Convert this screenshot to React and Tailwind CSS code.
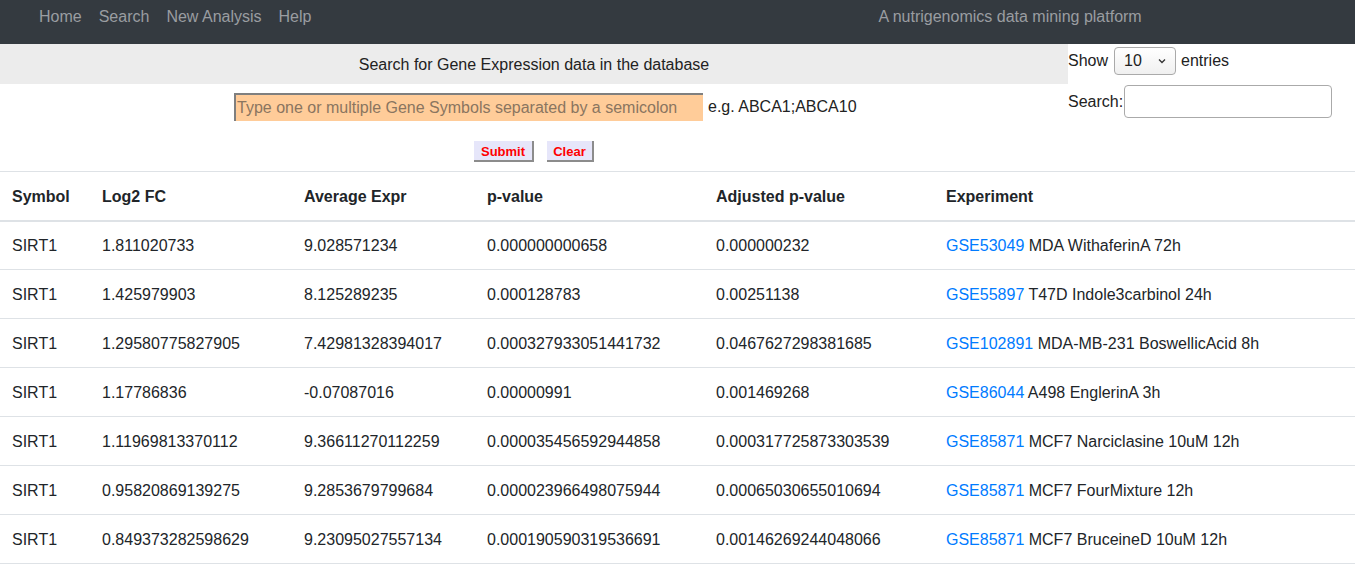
import React from 'react';

const rows = [
  ['SIRT1', '1.811020733', '9.028571234', '0.000000000658', '0.000000232', 'GSE53049', 'MDA WithaferinA 72h'],
  ['SIRT1', '1.425979903', '8.125289235', '0.000128783', '0.00251138', 'GSE55897', 'T47D Indole3carbinol 24h'],
  ['SIRT1', '1.29580775827905', '7.42981328394017', '0.000327933051441732', '0.0467627298381685', 'GSE102891', 'MDA-MB-231 BoswellicAcid 8h'],
  ['SIRT1', '1.17786836', '-0.07087016', '0.00000991', '0.001469268', 'GSE86044', 'A498 EnglerinA 3h'],
  ['SIRT1', '1.11969813370112', '9.36611270112259', '0.000035456592944858', '0.000317725873303539', 'GSE85871', 'MCF7 Narciclasine 10uM 12h'],
  ['SIRT1', '0.95820869139275', '9.2853679799684', '0.000023966498075944', '0.00065030655010694', 'GSE85871', 'MCF7 FourMixture 12h'],
  ['SIRT1', '0.849373282598629', '9.23095027557134', '0.000190590319536691', '0.00146269244048066', 'GSE85871', 'MCF7 BruceineD 10uM 12h'],
];

const App = () => {
  return (
    <div className="min-h-screen bg-white font-['Liberation_Sans',Arial,sans-serif] text-[16px] text-[#212529]">
      {/* Navbar */}
      <div className="h-[44px] bg-[#343a40] flex items-start pt-[7px]">
        <div className="flex gap-[17px] pl-[39px] leading-5 text-[#9a9da1]">
          <a>Home</a>
          <a>Search</a>
          <a>New Analysis</a>
          <a>Help</a>
        </div>
        <div className="ml-[567px] leading-5 text-[#9a9da1]">A nutrigenomics data mining platform</div>
      </div>

      {/* Search area */}
      <div className="flex">
        <div className="w-[1068px]">
          <div className="h-[40px] bg-[#ececec] flex items-center justify-center text-[#222] pt-[1px]">
            Search for Gene Expression data in the database
          </div>
          <div className="flex items-center pl-[234px] pt-[9px]">
            <input
              type="text"
              placeholder="Type one or multiple Gene Symbols separated by a semicolon"
              className="w-[469px] h-[28px] bg-[#ffcc99] border-t-2 border-l-2 border-r-0 border-b-0 border-[#7f7f7f] px-[1px] text-[16px] placeholder:text-[#8a7560] outline-none"
            />
            <span className="ml-[5px] text-[#222]">e.g. ABCA1;ABCA10</span>
          </div>
          <div className="flex gap-[13px] pl-[474px] pt-[20px]">
            <button className="w-[60px] h-[21px] bg-[#e6e6fa] border-r-2 border-b-2 border-[#8c8c8c] text-[#ff0000] font-bold text-[13px] leading-none pt-[1px]">
              Submit
            </button>
            <button className="w-[47px] h-[21px] bg-[#e6e6fa] border-r-2 border-b-2 border-[#8c8c8c] text-[#ff0000] font-bold text-[13px] leading-none pt-[1px]">
              Clear
            </button>
          </div>
        </div>
        <div className="flex-1 pt-[3px] text-[#222]">
          <div className="flex items-center h-[28px]">
            <span>Show</span>
            <div className="ml-[6px] mr-[5px] w-[62px] h-[28px] border border-[#aaa] rounded-[4px] bg-gradient-to-b from-white to-[#f0f0f0] flex items-center pl-[9px] pr-[8px] justify-between">
              <span>10</span>
              <svg width="10" height="10" viewBox="0 0 10 10"><path d="M2 3.5 L5 6.5 L8 3.5" stroke="#333" strokeWidth="1.3" fill="none" /></svg>
            </div>
            <span>entries</span>
          </div>
          <div className="flex items-center mt-[10px]">
            <span>Search:</span>
            <input type="text" className="ml-[1px] w-[208px] h-[33px] border border-[#aaa] rounded-[4px] bg-white outline-none" />
          </div>
        </div>
      </div>

      {/* Table */}
      <table className="w-full mt-[9px] border-collapse border-t border-[#dee2e6] text-left">
        <thead>
          <tr className="border-b-2 border-[#dee2e6]">
            <th className="w-[90px] px-[12px] pt-[2px] h-[49px] font-bold">Symbol</th>
            <th className="w-[202px] px-[12px] pt-[2px] font-bold">Log2 FC</th>
            <th className="w-[183px] px-[12px] pt-[2px] font-bold">Average Expr</th>
            <th className="w-[229px] px-[12px] pt-[2px] font-bold">p-value</th>
            <th className="w-[230px] px-[12px] pt-[2px] font-bold">Adjusted p-value</th>
            <th className="px-[12px] pt-[2px] font-bold">Experiment</th>
          </tr>
        </thead>
        <tbody>
          {rows.map((r, i) => (
            <tr key={i} className="border-b border-[#dee2e6]">
              <td className="px-[12px] pt-[2px] h-[49px]">{r[0]}</td>
              <td className="px-[12px] pt-[2px]">{r[1]}</td>
              <td className="px-[12px] pt-[2px]">{r[2]}</td>
              <td className="px-[12px] pt-[2px]">{r[3]}</td>
              <td className="px-[12px] pt-[2px]">{r[4]}</td>
              <td className="px-[12px] pt-[2px]">
                <a className="text-[#007bff]">{r[5]}</a> {r[6]}
              </td>
            </tr>
          ))}
        </tbody>
      </table>
    </div>
  );
};

export default App;
